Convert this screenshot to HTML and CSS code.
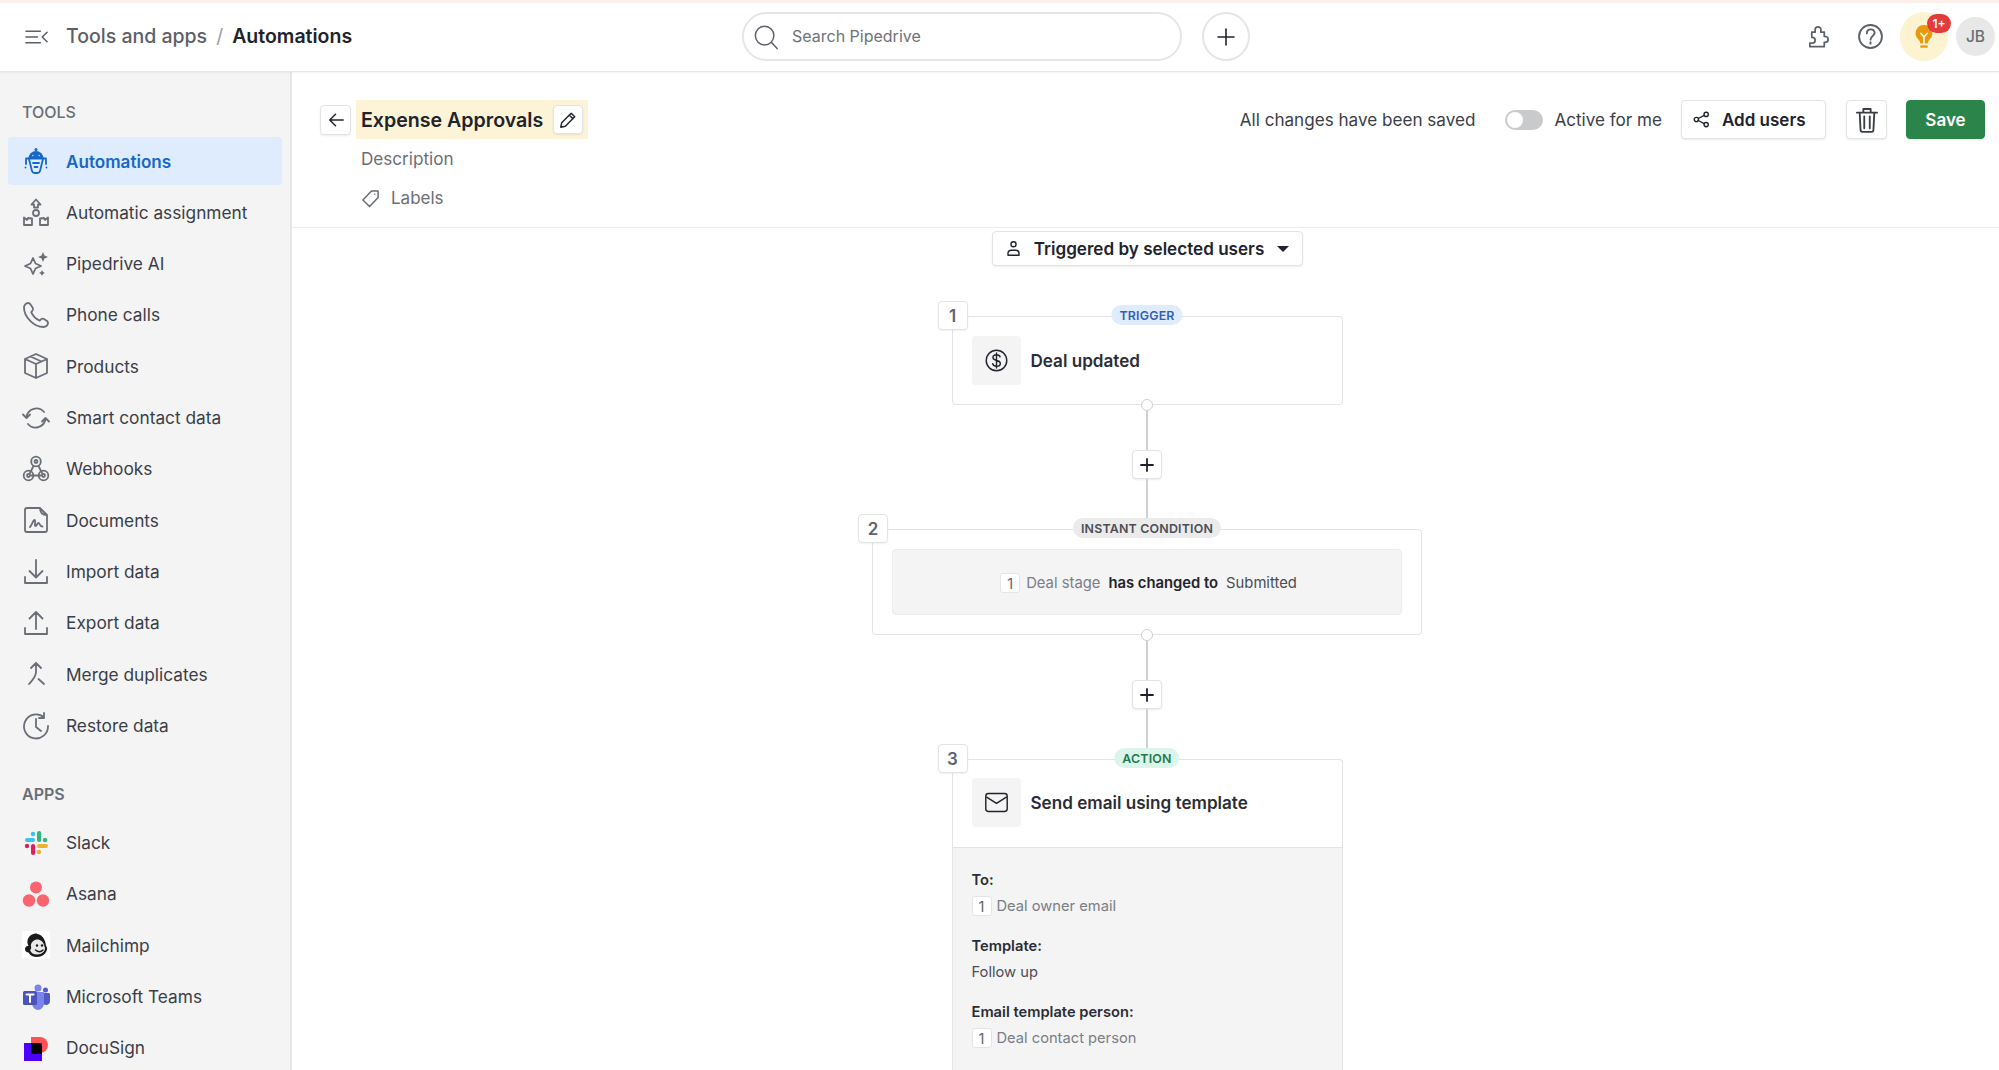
FILE: index.html
```html
<!DOCTYPE html>
<html lang="en">
<head>
<meta charset="utf-8">
<title>Automations</title>
<link rel="stylesheet" href="styles.css">
</head>
<body>
<div class="app">
  <header class="topbar">
    <div class="top-left">
      <svg class="menu-ico" viewBox="0 0 24 16"><path d="M1 2h15M1 8h12M1 14h15M23 3l-5 5 5 5"/></svg>
      <nav class="crumbs"><span class="crumb">Tools and apps</span><span class="sep">/</span><strong class="crumb-cur">Automations</strong></nav>
    </div>
    <div class="top-mid">
      <div class="search">
        <svg class="search-ico" viewBox="0 0 28 28"><circle cx="12.5" cy="12.5" r="10"/><path d="M20 20l6 6.5"/></svg>
        <span>Search Pipedrive</span>
      </div>
      <div class="round-plus"><svg viewBox="0 0 20 20"><path d="M10 2v16M2 10h16"/></svg></div>
    </div>
    <div class="top-right">
      <svg class="top-ico" viewBox="0 0 26 24"><path d="M9.500 7.500V5a3 3 0 0 1 6 0v2.500H19v4.500h1a3 3 0 0 1 0 6h-1v4.500H4V19h2.500a3 3 0 0 0 0-6H6V7.500z"/></svg>
      <svg class="top-ico help" viewBox="0 0 24 24"><circle cx="12" cy="12" r="11"/><path d="M8.500 9c0-5 7.500-5 7.500-.5 0 3-4 3-4 6.500M12 17.500v1.500"/></svg>
      <div class="bulb">
        <svg viewBox="0 0 20 28"><path class="bulb-f" d="M10 1a9 9 0 0 0-6 15.700c1.300 1.300 1.800 2.500 2 4.300h8c.2-1.800.7-3 2-4.300A9 9 0 0 0 10 1z"/><path class="bulb-y" d="M6.500 10l3.500 4 3.500-4M10 14v7"/><path class="bulb-f" d="M6 23h8v2.500H6z"/></svg>
        <span class="badge">1+</span>
      </div>
      <div class="avatar">JB</div>
    </div>
  </header>
  <div class="main">
    <aside class="sidebar">
      <h2 class="side-title">TOOLS</h2>
      <ul class="side-list">
        <li class="side-item active">
          <svg class="ico" viewBox="0 0 28 28"><circle class="solid" cx="14" cy="2.500" r="1.500"/><path class="solid" d="M6.500 11.500a7.500 7.500 0 0 1 15 0z"/><circle cx="10.800" cy="8.500" r=".7" class="eye"/><circle cx="17.200" cy="8.500" r=".7" class="eye"/><path d="M4 11.500h20M7 12l3 12c.3 1.200 1 2 2.500 2h3c1.500 0 2.200-.8 2.500-2l3-12M11 16h6M12.500 20h3M4 13v4M24 13v4M3.500 20.500v.1M24.500 20.500v.1"/></svg>
          <span>Automations</span>
        </li>
        <li class="side-item">
          <svg class="ico" viewBox="0 0 28 28"><path d="M14 1.500l4.500 5H16v3h-4v-3H9.500z"/><circle cx="14" cy="15" r="3"/><path d="M2 19.500l3 2.500 1-2 4 .5v6.500H2zM26 19.500l-3 2.500-1-2-4 .5v6.500h8z"/></svg>
          <span>Automatic assignment</span>
        </li>
        <li class="side-item">
          <svg class="ico" viewBox="0 0 28 28"><path d="M11 8l2.500 5.500L19 16l-5.500 2.500L11 24l-2.500-5.500L3 16l5.500-2.500z"/><path class="solid" d="M21 2l1.500 3.500L26 7l-3.500 1.500L21 12l-1.500-3.500L16 7l3.500-1.500zM20 20l1 2 2 1-2 1-1 2-1-2-2-1 2-1z"/></svg>
          <span>Pipedrive AI</span>
        </li>
        <li class="side-item">
          <svg class="ico" viewBox="0 0 28 28"><path d="M6 2c-2 0-4 2-4 4.500C2 16 12 26 21.500 26c2.500 0 4.500-2 4.500-4 0-1-.5-1.500-1-2l-3-2c-1-.6-2-.6-2.800.2l-1.500 1.500c-3.500-1.500-7-5-8.500-8.500L10.500 9.500c.8-.8.8-1.800.2-2.800l-2-3C8 2.500 7 2 6 2z"/></svg>
          <span>Phone calls</span>
        </li>
        <li class="side-item">
          <svg class="ico" viewBox="0 0 28 28"><path d="M14 2l11 5v14l-11 5-11-5V7zM3 7l11 5 11-5M14 12v14M8.500 4.500l11 5"/></svg>
          <span>Products</span>
        </li>
        <li class="side-item">
          <svg class="ico" viewBox="0 0 28 28"><path d="M4.500 13A10 10 0 0 1 22 8M1 10.500l3.500 3.500 3.500-3.500M23.500 15A10 10 0 0 1 6 20M27 17.500L23.500 14 20 17.500"/></svg>
          <span>Smart contact data</span>
        </li>
        <li class="side-item">
          <svg class="ico" viewBox="0 0 28 28"><circle cx="14" cy="6.500" r="4.800"/><circle cx="14" cy="6.500" r="1.500"/><circle cx="6.500" cy="20.500" r="4.800"/><circle cx="6.500" cy="20.500" r="1.500"/><circle cx="21.500" cy="20.500" r="4.800"/><circle cx="21.500" cy="20.500" r="1.500"/><path d="M11.500 11l-3.500 7M16.500 11l3.500 7M9 20.500h10"/></svg>
          <span>Webhooks</span>
        </li>
        <li class="side-item">
          <svg class="ico" viewBox="0 0 28 28"><path d="M5 2h13l7 7v15c0 1.200-.8 2-2 2H5c-1.200 0-2-.8-2-2V4c0-1.200.8-2 2-2zM18 2c0 5 2 7 7 7M8 21c2-2 3-7 4.500-7S12 20 13.500 20s1.500-3 3-3 1 3.500 4 3.500"/></svg>
          <span>Documents</span>
        </li>
        <li class="side-item">
          <svg class="ico" viewBox="0 0 28 28"><path d="M14 2v17M7.500 13l6.500 6.500 6.500-6.500M3 19v6h22v-6"/></svg>
          <span>Import data</span>
        </li>
        <li class="side-item">
          <svg class="ico" viewBox="0 0 28 28"><path d="M14 20V3M7.500 9.500L14 3l6.500 6.500M3 19v6h22v-6"/></svg>
          <span>Export data</span>
        </li>
        <li class="side-item">
          <svg class="ico" viewBox="0 0 28 28"><path d="M14 3v9M9 8l5-5 5 5M14 12c0 5-3.500 8-7 12M16.500 19l5.500 5"/></svg>
          <span>Merge duplicates</span>
        </li>
        <li class="side-item">
          <svg class="ico" viewBox="0 0 28 28"><path d="M22 5.500A12 12 0 1 0 26 14M14 7v8l5 4M22 1v5h-5"/></svg>
          <span>Restore data</span>
        </li>
      </ul>
      <h2 class="side-title apps">APPS</h2>
      <ul class="side-list">
        <li class="side-item">
          <svg class="ico brand" viewBox="0 0 28 28">
            <rect x="3" y="9" width="10" height="4" rx="2" fill="#36c5f0"/><circle cx="11" cy="5" r="2.200" fill="#36c5f0"/>
            <rect x="15" y="2" width="4.200" height="11" rx="2.100" fill="#2eb67d"/><circle cx="23" cy="11" r="2.200" fill="#2eb67d"/>
            <rect x="15" y="15" width="11" height="4" rx="2" fill="#ecb22e"/><circle cx="17" cy="23" r="2.200" fill="#ecb22e"/>
            <rect x="9" y="15" width="4.200" height="11" rx="2.100" fill="#e01e5a"/><circle cx="5" cy="17" r="2.200" fill="#e01e5a"/>
          </svg>
          <span>Slack</span>
        </li>
        <li class="side-item">
          <svg class="ico brand" viewBox="0 0 28 28"><circle cx="14" cy="7.500" r="6" fill="#f9646e"/><circle cx="7" cy="20.500" r="6.200" fill="#f9646e"/><circle cx="21" cy="20.500" r="6.200" fill="#f9646e"/></svg>
          <span>Asana</span>
        </li>
        <li class="side-item">
          <svg class="ico brand" viewBox="0 0 28 28"><rect width="28" height="28" rx="2" fill="#fff"/><path fill="#1a1a1a" d="M15 2.500c-5 0-8.500 2.500-9.500 7C5 12 6 13.500 6.500 15c-2-.5-3.500 1-3.500 3s1.500 3.500 3.500 3.500c1.500 3 5 4.500 8.500 4.500 5 0 9-3 10-7.500.4-2-.5-3-1-3.500-.5-7-4.500-12-9-12z"/><path fill="#e9e9e9" d="M13 9c4-1.500 8 1 9 5 .3 1.500.8 2 1 3 .3 3-3 6.500-8 6.500-3.500 0-6-1.500-7-4.500 1-.5 1.500-2 1-3.500-.5-3 1.500-5.500 4-6.500z"/><circle cx="15" cy="14.500" r="1.200" fill="#1a1a1a"/><circle cx="20" cy="14.500" r="1.200" fill="#1a1a1a"/><path d="M13.500 19c2.500 2 5.500 2 7.500 0" fill="none" stroke="#1a1a1a" stroke-width="1.500"/></svg>
          <span>Mailchimp</span>
        </li>
        <li class="side-item">
          <svg class="ico brand" viewBox="0 0 28 28"><circle cx="16" cy="5" r="3.500" fill="#7b83eb"/><circle cx="23.500" cy="7" r="2.500" fill="#5059c9"/><path d="M20 10h6.500c.8 0 1.500.7 1.500 1.500V18c0 2.500-2 4-4 4s-3-1-4-2z" fill="#5059c9"/><path d="M10 9h11c.6 0 1 .4 1 1v10c0 4-3 7-6 7s-6-3-6-7z" fill="#7b83eb"/><rect x="1" y="8" width="14" height="14" rx="1.500" fill="#4b53bc"/><path d="M4.500 11.500h7M8 11.500v7.500" fill="none" stroke="#fff" stroke-width="2"/></svg>
          <span>Microsoft Teams</span>
        </li>
        <li class="side-item">
          <svg class="ico brand" viewBox="0 0 28 28"><path d="M9 3h9a8 8 0 0 1 0 16H9z" fill="#ff5252"/><rect x="2" y="9" width="18" height="18" fill="#4c00ff"/><path d="M9 9h6c3 0 5 2 5 5v6H9z" fill="#000"/></svg>
          <span>DocuSign</span>
        </li>
      </ul>
    </aside>
    <section class="content">
      <div class="head">
        <div class="head-left">
          <button class="btn back"><svg viewBox="0 0 20 20"><path d="M18 10H3M9.500 3.500L3 10l6.500 6.500"/></svg></button>
          <div class="head-text">
            <div class="title-wrap">
              <h1>Expense Approvals</h1>
              <button class="btn pencil"><svg viewBox="0 0 20 20"><path d="M13.500 2.500l4 4L7 17l-5 1 1-5zM11.500 4.500l4 4"/></svg></button>
            </div>
            <div class="desc">Description</div>
            <div class="labels"><svg viewBox="0 0 20 20"><path d="M11 2h7v7l-9 9.500-7-7zM14.500 5.500v.1"/></svg><span>Labels</span></div>
          </div>
        </div>
        <div class="head-right">
          <span class="saved">All changes have been saved</span>
          <span class="toggle"><i></i></span>
          <span class="active-me">Active for me</span>
          <button class="btn add"><svg viewBox="0 0 20 20"><circle cx="4" cy="10" r="2.500"/><circle cx="15.500" cy="4" r="2.500"/><circle cx="15.500" cy="16" r="2.500"/><path d="M6.200 8.800l7-3.600M6.200 11.200l7 3.600"/></svg><span>Add users</span></button>
          <button class="btn trash"><svg viewBox="0 0 24 28"><path d="M1 6h22M8 6V2h8v4M4 6l1 19c0 1 .8 2 2 2h10c1.200 0 2-1 2-2l1-19M9 10v13M15 10v13"/></svg></button>
          <button class="btn save">Save</button>
        </div>
      </div>
      <div class="flow">
        <button class="btn trig">
          <svg viewBox="0 0 20 20"><circle cx="10" cy="5" r="3"/><path d="M3.500 18v-2c0-2.500 2-4 4-4h5c2 0 4 1.500 4 4v2z"/></svg>
          <span>Triggered by selected users</span>
          <i class="caret"></i>
        </button>

        <article class="card c-small first">
          <span class="num">1</span>
          <span class="tag tag-blue">TRIGGER</span>
          <div class="card-head">
            <div class="tile"><svg viewBox="0 0 28 28"><circle cx="14" cy="14" r="11.500"/><path d="M18 10c-.5-2-2-2.500-4-2.500s-4 1-4 3.200c0 4.800 8.300 1.800 8.300 6.600 0 2.200-2 3.200-4.300 3.200s-3.800-1-4.300-2.800M14 5.500v17"/></svg></div>
            <span class="card-name">Deal updated</span>
          </div>
          <i class="dot"></i>
        </article>

        <div class="conn"><i></i><button class="btn plus"><svg viewBox="0 0 14 14"><path d="M7 1v12M1 7h12"/></svg></button><i></i></div>

        <article class="card c-wide">
          <span class="num">2</span>
          <span class="tag tag-gray">INSTANT CONDITION</span>
          <div class="cond">
            <span class="chip">1</span>
            <span class="muted">Deal stage</span>
            <b>has changed to</b>
            <span class="plain">Submitted</span>
          </div>
          <i class="dot"></i>
        </article>

        <div class="conn"><i></i><button class="btn plus"><svg viewBox="0 0 14 14"><path d="M7 1v12M1 7h12"/></svg></button><i></i></div>

        <article class="card c-small last">
          <span class="num">3</span>
          <span class="tag tag-green">ACTION</span>
          <div class="card-head ruled">
            <div class="tile"><svg viewBox="0 0 28 24"><rect x="2" y="2" width="24" height="20" rx="3"/><path d="M3 6l11 7 11-7"/></svg></div>
            <span class="card-name">Send email using template</span>
          </div>
          <div class="card-body">
            <div class="group"><b>To:</b><div class="val"><span class="chip">1</span><span class="muted">Deal owner email</span></div></div>
            <div class="group"><b>Template:</b><div class="val"><span class="plain">Follow up</span></div></div>
            <div class="group"><b>Email template person:</b><div class="val"><span class="chip">1</span><span class="muted">Deal contact person</span></div></div>
          </div>
        </article>
      </div>
    </section>
  </div>
</div>
</body>
</html>
```
FILE: styles.css
```css
* { box-sizing: border-box; }
html, body { margin: 0; height: 100%; overflow: hidden; background: #fff; }
body { font-family: Inter, "Noto Sans", sans-serif; color: #21232c; font-size: 16px; }
svg { fill: none; stroke: currentColor; stroke-width: 1.6; stroke-linecap: round; stroke-linejoin: round; display: block; }
ul { list-style: none; margin: 0; padding: 0; }
h1, h2 { margin: 0; }
button { font: inherit; color: inherit; padding: 0; cursor: pointer; }

.app { height: 1070px; display: flex; flex-direction: column; }

/* top bar */
.topbar { height: 72px; flex: none; border-top: 3px solid #fdf0ea; border-bottom: 1px solid #e6e6e7; box-shadow: 0 1px 2px rgba(0,0,0,.05); padding-bottom: 1px; display: flex; align-items: center; position: relative; z-index: 2; background: #fff; }
.top-left { width: 742px; flex: none; display: flex; align-items: center; padding-left: 25px; }
.menu-ico { width: 23px; height: 16px; color: #5c6068; margin-right: 18px; }
.crumbs { display: flex; align-items: center; font-size: 19.500px; padding-bottom: 2px; }
.crumb { color: #5b5f68; font-weight: 500; }
.sep { color: #9a9da3; margin: 0 9px; }
.crumb-cur { font-weight: 600; color: #21232c; }
.top-mid { display: flex; gap: 20px; align-items: center; }
.search { width: 440px; height: 49px; border: 2px solid #e6e6e7; border-radius: 25px; display: flex; align-items: center; padding-left: 9px; gap: 13px; color: #6e727a; font-size: 16px; }
.search span { padding-bottom: 2px; }
.search-ico { width: 26px; height: 26px; color: #5c6068; }
.round-plus { width: 48px; height: 49px; border: 2px solid #e6e6e7; border-radius: 50%; display: flex; align-items: center; justify-content: center; }
.round-plus svg { width: 20px; height: 20px; }
.top-right { margin-left: auto; display: flex; align-items: center; padding-right: 4px; }
.top-ico { width: 25px; height: 25px; color: #5c6068; stroke-width: 1.800; }
.top-ico.help { margin: 0 17px 0 27px; }
.bulb { width: 48px; height: 49px; border-radius: 50%; background: #fdf3d0; display: flex; align-items: center; justify-content: center; position: relative; }
.bulb svg { width: 20px; height: 26px; stroke: none; }
.bulb-f { fill: #e8990c; stroke: none; }
.bulb-y { stroke: #fff; stroke-width: 1.600; fill: none; }
.badge { position: absolute; top: 2px; right: -3px; width: 24px; height: 19px; border-radius: 10px; background: #e23c3c; color: #fff; font-size: 12px; font-weight: 600; display: flex; align-items: center; justify-content: center; }
.avatar { width: 39px; height: 39px; margin-left: 8px; border-radius: 50%; background: #e8e8e9; color: #6a6e76; font-size: 15.500px; font-weight: 500; display: flex; align-items: center; justify-content: center; }

.main { flex: 1; display: flex; min-height: 0; }

/* sidebar */
.sidebar { width: 292px; flex: none; background: #f4f4f4; border-right: 2px solid #e6e6e7; padding-top: 30px; overflow: hidden; }
.side-title { font-size: 16px; line-height: 20px; font-weight: 500; color: #6a6e76; padding-left: 22px; margin-bottom: 15px; }
.side-title.apps { margin-top: 34px; font-weight: 600; }
.side-list { display: flex; flex-direction: column; gap: 3.333px; margin: 0 8px; }
.side-item { height: 48px; flex: none; display: flex; align-items: center; gap: 16px; padding-left: 14px; border-radius: 4px; color: #3a3e47; font-size: 17.300px; }
.side-item.active { background: #dfecfd; color: #1668c7; font-weight: 600; font-size: 17.100px; }
.ico { width: 28px; height: 28px; color: #6a6e76; flex: none; stroke-width: 1.800; }
.active .ico { color: #1668c7; }
.ico .solid { fill: currentColor; stroke: none; }
.ico .eye { fill: #dfecfd; stroke: none; }
.ico.brand { stroke: none; }

/* content */
.content { flex: 1; min-width: 0; display: flex; flex-direction: column; }
.head { height: 156px; flex: none; border-bottom: 1px solid #ececed; display: flex; justify-content: space-between; padding: 28px 14px 0 28px; }
.head-left { display: flex; gap: 5px; align-items: flex-start; }
.btn { background: #fff; border: 1.500px solid #e3e4e6; border-radius: 4px; box-shadow: 0 1px 2px rgba(0,0,0,.08); display: inline-flex; align-items: center; justify-content: center; }
.back { width: 31px; height: 30px; margin-top: 5px; }
.back svg { width: 18px; height: 18px; }
.head-text { display: flex; flex-direction: column; }
.title-wrap { height: 39px; background: #fdf3d6; display: flex; align-items: center; padding: 0 5px; gap: 10px; }
.title-wrap h1 { font-size: 19.600px; font-weight: 600; letter-spacing: 0; }
.pencil { width: 30px; height: 29px; }
.pencil svg { width: 18px; height: 18px; }
.desc { padding-left: 5px; margin-top: 10px; line-height: 20px; color: #6a6e76; font-size: 17.100px; }
.labels { padding-left: 5px; margin-top: 19px; line-height: 20px; color: #6a6e76; font-size: 17px; display: flex; align-items: center; gap: 11px; }
.labels svg { width: 19px; height: 19px; }
.head-right { display: flex; align-items: flex-start; }
.saved, .active-me { line-height: 39px; font-size: 17.100px; color: #3a3e47; }
.toggle { width: 38px; height: 20px; margin: 9.500px 11px 0 30px; border-radius: 10px; background: #c9cacc; padding: 2px; display: block; }
.toggle i { display: block; width: 16px; height: 16px; border-radius: 50%; background: #fff; }
.add { width: 145px; height: 39px; margin-left: 19px; gap: 12px; font-weight: 600; font-size: 17px; justify-content: flex-start; padding-left: 11px; }
.add svg { width: 17px; height: 17px; }
.trash { width: 41px; height: 39px; margin-left: 20px; }
.trash svg { width: 22px; height: 26px; stroke-width: 2; color: #3a3e47; }
.save { width: 79px; height: 39px; margin-left: 19px; background: #2b844a; border-color: #2b844a; color: #fff; font-weight: 600; font-size: 17px; }

/* flow */
.flow { flex: 1; min-height: 0; overflow: hidden; display: flex; flex-direction: column; align-items: center; padding: 3px 0 0 3px; }
.trig { width: 311px; height: 35px; flex: none; gap: 12px; font-weight: 600; font-size: 17.100px; margin-bottom: 50px; }
.trig svg { width: 17px; height: 17px; }
.caret { width: 0; height: 0; border-left: 6px solid transparent; border-right: 6px solid transparent; border-top: 6px solid #21232c; margin-left: 1px; }

.card { position: relative; flex: none; background: #fff; border: 1.500px solid #e3e4e6; border-radius: 4px; }
.c-small { width: 391px; }
.c-wide { width: 550px; height: 106px; padding: 19px; }
.first { height: 89px; }
.last { border-bottom: 0; border-radius: 4px 4px 0 0; }
.num { position: absolute; left: -15px; top: -16px; width: 30px; height: 29px; background: #fff; border: 1.500px solid #e3e4e6; border-radius: 4px; box-shadow: 0 1px 2px rgba(0,0,0,.06); display: flex; align-items: center; justify-content: center; font-size: 17px; font-weight: 600; color: #5f636b; z-index: 1; }
.tag { position: absolute; left: 50%; top: -12px; transform: translateX(-50%); height: 20px; padding: 0 8px; border-radius: 10px; font-size: 12.400px; font-weight: 600; letter-spacing: .2px; display: flex; align-items: center; white-space: nowrap; z-index: 1; }
.tag-blue { background: #dfecfd; color: #2f5fb8; }
.tag-gray { background: #ebebec; color: #4a4e56; }
.tag-green { background: #dcf5ea; color: #227a4a; }
.card-head { height: 86px; display: flex; align-items: center; gap: 10px; padding-left: 19px; }
.ruled { height: 88px; padding-bottom: 2px; border-bottom: 1.500px solid #e3e4e6; }
.tile { width: 49px; height: 49px; background: #f4f4f4; border-radius: 4px; display: flex; align-items: center; justify-content: center; color: #21232c; }
.tile svg { width: 25px; height: 25px; }
.card-name { font-size: 17.100px; font-weight: 600; color: #2b2d35; }
.dot { position: absolute; left: 50%; bottom: -7px; width: 12px; height: 12px; margin-left: -6px; background: #fff; border: 1.500px solid #cfd0d3; border-radius: 50%; z-index: 1; }
.conn { height: 124px; flex: none; display: flex; flex-direction: column; align-items: center; }
.conn i { width: 2px; background: #cfd0d3; height: 45px; flex: none; }
.conn i:last-child { flex: 1; height: auto; }
.plus { width: 30px; height: 29px; flex: none; }
.plus svg { width: 14px; height: 14px; stroke-width: 1.800; }
.cond { height: 66px; background: #f4f4f4; border: 1px solid #ececed; border-radius: 4px; display: flex; align-items: center; justify-content: center; gap: 6px; font-size: 14.800px; padding: 2px 0 0 3px; }
.cond b { font-weight: 600; margin: 0 2px; }
.chip { width: 20px; height: 20px; background: #fff; border: 1px solid #e3e4e6; border-radius: 3px; display: inline-flex; align-items: center; justify-content: center; font-size: 14.500px; color: #5f636b; flex: none; }
.muted { color: #7a7e86; }
.plain { color: #4a4e56; }
.card-body { background: #f4f4f4; padding: 22px 19px 20px; height: 224px; font-size: 14.700px; }
.group { margin-bottom: 20px; }
.group b { display: block; line-height: 20px; font-weight: 600; color: #2b2d35; }
.val { display: flex; align-items: center; gap: 5px; height: 20px; margin-top: 6px; }
```
